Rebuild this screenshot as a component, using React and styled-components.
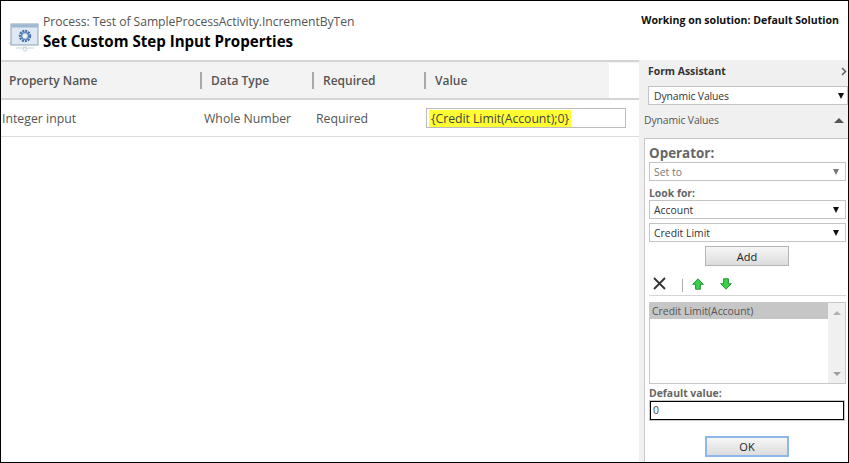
import React from "react";
import styled, { createGlobalStyle } from "styled-components";

const GlobalStyle = createGlobalStyle`
  html, body {
    margin: 0;
    padding: 0;
    background: #fff;
  }
  * {
    box-sizing: border-box;
  }
`;

const FONT = `"Open Sans", "Noto Sans", "Liberation Sans", sans-serif`;

const Page = styled.div`
  width: 849px;
  height: 463px;
  border: 1px solid #000;
  background: #fff;
  display: flex;
  flex-direction: column;
  font-family: ${FONT};
  color: #444;
  overflow: hidden;
`;

const Header = styled.header`
  height: 61px;
  flex: none;
  display: flex;
  border-bottom: 2px solid #d4d4d4;
  padding: 12px 9px 0 7px;
`;

const HeaderIcon = styled.svg`
  width: 32px;
  height: 30px;
  margin-top: 9px;
  flex: none;
`;

const Titles = styled.div`
  margin-left: 3px;
  flex: 1;
`;

const ProcessName = styled.div`
  font-size: 12.2px;
  line-height: 17px;
  letter-spacing: -0.07px;
  color: #555;
`;

const StepTitle = styled.h1`
  margin: 1px 0 0;
  font-size: 15.1px;
  line-height: 20px;
  font-weight: 700;
  color: #000;
`;

const Solution = styled.div`
  font-size: 10.55px;
  line-height: 15px;
  font-weight: 700;
  color: #111;
  white-space: nowrap;
`;

const Body = styled.div`
  flex: 1;
  display: flex;
  min-height: 0;
`;

const Main = styled.main`
  width: 638px;
  flex: none;
`;

const HeadRow = styled.div`
  height: 38px;
  display: flex;
  align-items: center;
  background: #f3f3f3;
  border-bottom: 2px solid #d4d4d4;
`;

const HeadCell = styled.div`
  width: ${(p) => p.$width}px;
  height: 17px;
  flex: none;
  display: flex;
  align-items: center;
  font-size: 12px;
  font-weight: 600;
  color: #555;
  padding-left: ${(p) => (p.$first ? 8 : 9)}px;
  border-left: ${(p) => (p.$first ? "none" : "2px solid #a8a8a8")};
`;

const HeadCorner = styled.div`
  width: 30px;
  height: 35px;
  background: #fff;
  flex: none;
`;

const DataRow = styled.div`
  height: 37px;
  display: flex;
  align-items: center;
  border-bottom: 1px solid #dcdcdc;
  font-size: 12.3px;
  color: #555;
`;

const DataCell = styled.div`
  width: ${(p) => p.$width}px;
  padding-left: ${(p) => p.$pad}px;
  flex: none;
`;

const ValueBox = styled.div`
  width: 200px;
  height: 20px;
  margin-left: 1px;
  border: 1px solid #bcbcbc;
  padding: 1px 0 0 2px;
  overflow: hidden;
`;

const Highlight = styled.span`
  display: inline-block;
  height: 18px;
  padding: 0 2px;
  background: #ffff33;
  font-size: 12.3px;
  line-height: 18px;
  letter-spacing: -0.06px;
  color: #444;
  white-space: nowrap;
`;

const Side = styled.aside`
  flex: 1;
  background: #f0f0f0;
  margin-top: -2px;
  display: flex;
  flex-direction: column;
  padding: 0 0 0 5px;
  min-width: 0;
`;

const AssistantTitle = styled.div`
  height: 23px;
  display: flex;
  align-items: center;
  justify-content: space-between;
  padding: 0 1px 1px 4px;
  font-size: 10.4px;
  font-weight: 700;
  color: #333;
`;

const Select = styled.div`
  height: 19px;
  display: flex;
  align-items: center;
  justify-content: space-between;
  background: #fff;
  border: 1px solid #c4c4c4;
  padding: 0 6px 0 4px;
  font-size: 10.4px;
  color: ${(p) => (p.$disabled ? "#777" : "#333")};
  flex: none;
`;

const TopSelect = styled(Select)`
  margin: 3px 0 0 4px;
  padding: 0 3px 0 5px;
  letter-spacing: -0.12px;
`;

const Arrow = styled.span`
  width: 0;
  height: 0;
  border-left: 3.5px solid transparent;
  border-right: 3.5px solid transparent;
  border-top: 6px solid ${(p) => (p.$disabled ? "#777" : "#111")};
`;

const SectionHead = styled.div`
  height: 33px;
  display: flex;
  align-items: center;
  justify-content: space-between;
  padding: 0 4px 3px 0;
  font-size: 10.4px;
  letter-spacing: -0.12px;
  color: #555;
`;

const UpArrow = styled.span`
  width: 0;
  height: 0;
  border-left: 5px solid transparent;
  border-right: 5px solid transparent;
  border-bottom: 5px solid #555;
`;

const Panel = styled.section`
  flex: 1;
  background: #fff;
  border: solid #c8c8c8;
  border-width: 1px 0 0 1px;
  padding: 6px 2px 0 4px;
  display: flex;
  flex-direction: column;
`;

const OperatorLabel = styled.div`
  font-size: 13.4px;
  line-height: 17px;
  font-weight: 700;
  color: #666;
`;

const FieldLabel = styled.div`
  font-size: 10.4px;
  line-height: 14px;
  font-weight: 700;
  color: #666;
  margin: ${(p) => p.$margin};
`;

const Spaced = styled.div`
  margin-top: 4px;
`;

const CenterRow = styled.div`
  display: flex;
  justify-content: flex-start;
  padding-left: 56px;
  margin-top: ${(p) => p.$top}px;
`;

const Button = styled.button`
  width: 84px;
  height: ${(p) => (p.$primary ? 21 : 20)}px;
  padding: 0;
  font-family: ${FONT};
  font-size: 11px;
  color: #222;
  background: linear-gradient(#f6f6f6, #dcdcdc);
  border: ${(p) => (p.$primary ? "2px solid #8db8ea" : "1px solid #b4b4b4")};
`;

const Toolbar = styled.div`
  height: 30px;
  display: flex;
  align-items: center;
  padding: 5px 0 0 4px;
  border-bottom: 1px solid #d4d4d4;
`;

const ToolSep = styled.span`
  width: 1px;
  height: 13px;
  background: #b0b0b0;
  margin: 4px 9px 0 16px;
`;

const ToolIcon = styled.svg`
  display: block;
  flex: none;
  margin-left: ${(p) => p.$left || 0}px;
`;

const MoveGlyph = styled(ToolIcon)`
  margin-top: 2px;
  transform: ${(p) => (p.$down ? "scaleY(-1)" : "none")};
`;

const ListBox = styled.div`
  height: 82px;
  margin-top: 6px;
  border: 1px solid #c8c8c8;
  display: flex;
  font-size: 10.4px;
  color: #555;
`;

const ListItems = styled.div`
  flex: 1;
`;

const ListItem = styled.div`
  height: 16px;
  line-height: 16px;
  padding-left: 2px;
  background: #c6c6c6;
`;

const ScrollBar = styled.div`
  width: 17px;
  background: #f0f0f0;
  display: flex;
  flex-direction: column;
  align-items: center;
  justify-content: space-between;
  padding: 8px 0 7px;
`;

const ScrollUp = styled.span`
  width: 0;
  height: 0;
  border-left: 4px solid transparent;
  border-right: 4px solid transparent;
  border-bottom: 4px solid #b0b0b0;
`;

const ScrollDown = styled.span`
  width: 0;
  height: 0;
  border-left: 4px solid transparent;
  border-right: 4px solid transparent;
  border-top: 4px solid #a0a0a0;
`;

const DefaultInput = styled.div`
  height: 19px;
  margin: 1px 0 0 1px;
  width: 194px;
  border: 1px solid #000;
  outline: 1px solid #c8c8c8;
  padding-left: 2px;
  font-size: 10.4px;
  line-height: 17px;
  color: #444;
`;

const Chevron = () => (
  <svg width="6" height="9" viewBox="0 0 6 9">
    <path d="M1 1l3.5 3.5L1 8" fill="none" stroke="#666" strokeWidth="1.6" />
  </svg>
);

const ProcessIcon = () => (
  <HeaderIcon viewBox="0 0 32 30">
    <path d="M0 21l3-1v3z" fill="#dfe3e8" />
    <rect x="3" y="2" width="27" height="21" fill="#dfe9f3" stroke="#8ba0b4" />
    <rect x="3.5" y="2.5" width="26" height="3" fill="#9db8d2" />
    <circle cx="17" cy="14" r="5" fill="none" stroke="#4a6fa8" strokeWidth="2.4" strokeDasharray="2 0.9" />
    <circle cx="17" cy="14" r="3.4" fill="none" stroke="#5e86bd" strokeWidth="1.4" />
    <circle cx="17" cy="14" r="1.5" fill="#eef3f8" />
    <path d="M8 26h18" stroke="#e6e9ee" strokeWidth="2" />
    <circle cx="17" cy="27" r="2" fill="none" stroke="#c8d2de" />
  </HeaderIcon>
);

const CloseIcon = () => (
  <ToolIcon width="13" height="13" viewBox="0 0 13 13">
    <path d="M1 1l11 11M12 1L1 12" stroke="#333" strokeWidth="1.8" />
  </ToolIcon>
);

const MoveIcon = ({ down, left }) => (
  <MoveGlyph $left={left} $down={down} width="12" height="12" viewBox="0 0 12 12">
    <path d="M6 .8L11.3 6.3H8.4V11.2H3.6V6.3H.7z" fill="#39d04a" stroke="#1c8a2b" strokeWidth="0.9" />
  </MoveGlyph>
);

export default function App() {
  return (
    <Page>
      <GlobalStyle />
      <Header>
        <ProcessIcon />
        <Titles>
          <ProcessName>Process: Test of SampleProcessActivity.IncrementByTen</ProcessName>
          <StepTitle>Set Custom Step Input Properties</StepTitle>
        </Titles>
        <Solution>Working on solution: Default Solution</Solution>
      </Header>
      <Body>
        <Main>
          <HeadRow>
            <HeadCell $first $width={199}>Property Name</HeadCell>
            <HeadCell $width={112}>Data Type</HeadCell>
            <HeadCell $width={112}>Required</HeadCell>
            <HeadCell $width={185}>Value</HeadCell>
            <HeadCorner />
          </HeadRow>
          <DataRow>
            <DataCell $width={203} $pad={1}>Integer input</DataCell>
            <DataCell $width={112} $pad={0}>Whole Number</DataCell>
            <DataCell $width={109} $pad={0}>Required</DataCell>
            <ValueBox>
              <Highlight>{"{Credit Limit(Account);0}"}</Highlight>
            </ValueBox>
          </DataRow>
        </Main>
        <Side>
          <AssistantTitle>
            Form Assistant
            <Chevron />
          </AssistantTitle>
          <TopSelect>
            Dynamic Values
            <Arrow />
          </TopSelect>
          <SectionHead>
            Dynamic Values
            <UpArrow />
          </SectionHead>
          <Panel>
            <OperatorLabel>Operator:</OperatorLabel>
            <Select $disabled>
              Set to
              <Arrow $disabled />
            </Select>
            <FieldLabel $margin="5px 0 0">Look for:</FieldLabel>
            <Select>
              Account
              <Arrow />
            </Select>
            <Spaced>
              <Select>
                Credit Limit
                <Arrow />
              </Select>
            </Spaced>
            <CenterRow $top={4}>
              <Button type="button">Add</Button>
            </CenterRow>
            <Toolbar>
              <CloseIcon />
              <ToolSep />
              <MoveIcon />
              <MoveIcon down left={16} />
            </Toolbar>
            <ListBox>
              <ListItems>
                <ListItem>Credit Limit(Account)</ListItem>
              </ListItems>
              <ScrollBar>
                <ScrollUp />
                <ScrollDown />
              </ScrollBar>
            </ListBox>
            <FieldLabel $margin="2px 0 0">Default value:</FieldLabel>
            <DefaultInput>0</DefaultInput>
            <CenterRow $top={16}>
              <Button type="button" $primary>OK</Button>
            </CenterRow>
          </Panel>
        </Side>
      </Body>
    </Page>
  );
}
